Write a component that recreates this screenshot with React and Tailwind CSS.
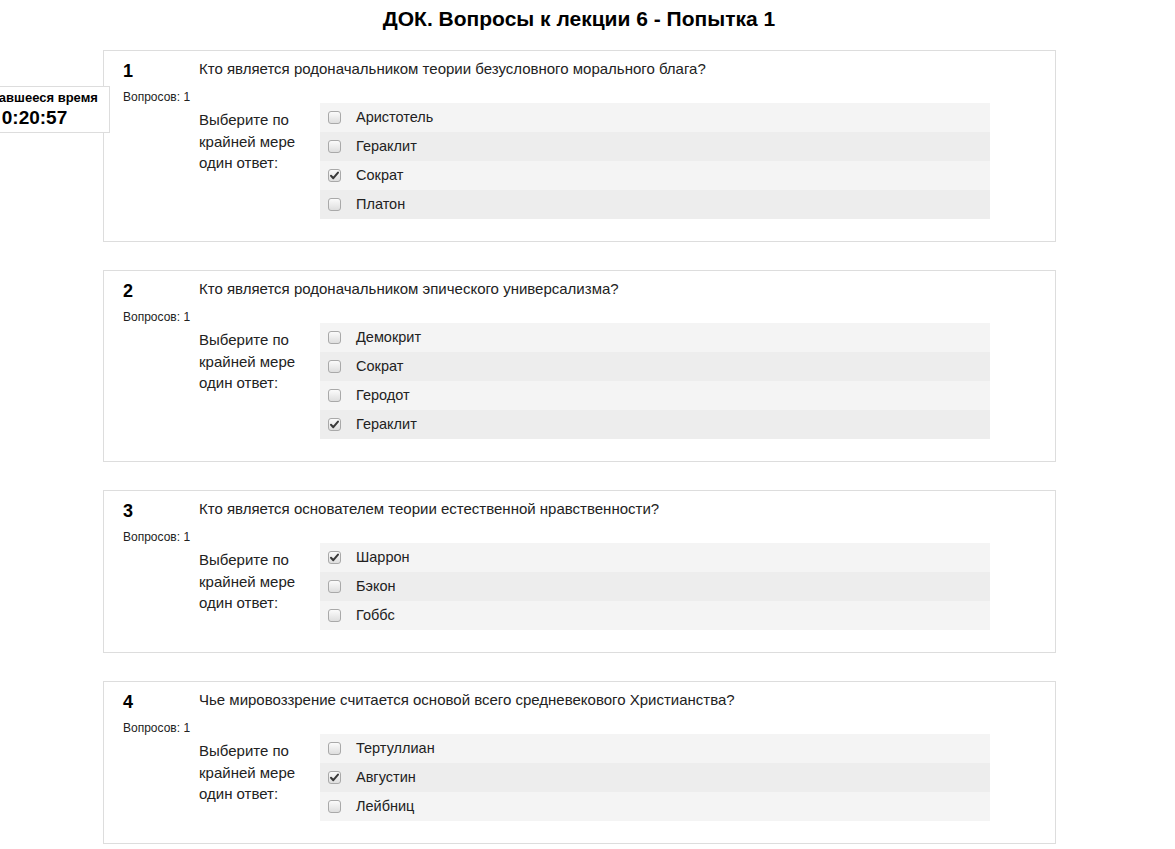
import React from 'react';

const questions = [
  {
    n: 1,
    text: 'Кто является родоначальником теории безусловного морального блага?',
    options: ['Аристотель', 'Гераклит', 'Сократ', 'Платон'],
    checked: 2,
  },
  {
    n: 2,
    text: 'Кто является родоначальником эпического универсализма?',
    options: ['Демокрит', 'Сократ', 'Геродот', 'Гераклит'],
    checked: 3,
  },
  {
    n: 3,
    text: 'Кто является основателем теории естественной нравственности?',
    options: ['Шаррон', 'Бэкон', 'Гоббс'],
    checked: 0,
  },
  {
    n: 4,
    text: 'Чье мировоззрение считается основой всего средневекового Христианства?',
    options: ['Тертуллиан', 'Августин', 'Лейбниц'],
    checked: 1,
  },
];

function Checkbox({ checked }) {
  return (
    <span className="w-[13px] h-[13px] rounded-[3px] border border-[#a9a9a9] bg-gradient-to-b from-[#fbfbfb] to-[#dedede] flex items-center justify-center shrink-0">
      {checked && (
        <svg width="11" height="11" viewBox="0 0 11 11">
          <path d="M2 5.8 L4.3 8.2 L9 2.6" fill="none" stroke="#3a3a3a" strokeWidth="2" strokeLinecap="round" strokeLinejoin="round" />
        </svg>
      )}
    </span>
  );
}

function QuestionCard({ q }) {
  return (
    <div className="border border-[#dddddd] bg-white flex pt-[8px] pb-[22px]">
      <div className="w-[95px] pl-[19px] shrink-0">
        <div className="text-[18px] font-bold leading-[22px] text-black mt-[1px]">{q.n}</div>
        <div className="text-[12px] leading-[16px] mt-[7px] text-[#222]">Вопросов: 1</div>
      </div>
      <div className="flex flex-col">
        <div className="text-[15px] leading-[20px] text-[#222]">{q.text}</div>
        <div className="flex mt-[24px]">
          <div className="w-[121px] pt-[6px] text-[15px] leading-[21.5px] text-[#222]">
            Выберите по
            <br />
            крайней мере
            <br />
            один ответ:
          </div>
          <div className="w-[670px]">
            {q.options.map((opt, i) => (
              <div
                key={opt}
                className={`h-[29px] flex items-center pl-[8px] ${i % 2 === 0 ? 'bg-[#f4f4f4]' : 'bg-[#ededed]'}`}
              >
                <Checkbox checked={i === q.checked} />
                <span className="ml-[15px] text-[14.5px] text-[#222]">{opt}</span>
              </div>
            ))}
          </div>
        </div>
      </div>
    </div>
  );
}

export default function App() {
  return (
    <div className="relative w-[1158px] h-[849px] overflow-hidden bg-white font-['Liberation_Sans',Arial,sans-serif]">
      <h1 className="text-center text-[21px] font-bold leading-[24px] pt-[7px] text-black">
        ДОК. Вопросы к лекции 6 - Попытка 1
      </h1>
      <div className="ml-[103px] w-[953px] mt-[19px] flex flex-col gap-[28px]">
        {questions.map(q => (
          <QuestionCard key={q.n} q={q} />
        ))}
      </div>
      <div className="absolute left-[-41px] top-[86px] w-[151px] h-[47px] border border-[#dddddd] bg-white text-center text-black">
        <div className="text-[13px] font-bold leading-[16px] pt-[3px] pl-[4px]">Оставшееся время</div>
        <div className="text-[19px] font-bold leading-[22px] mt-[1px]">0:20:57</div>
      </div>
    </div>
  );
}
